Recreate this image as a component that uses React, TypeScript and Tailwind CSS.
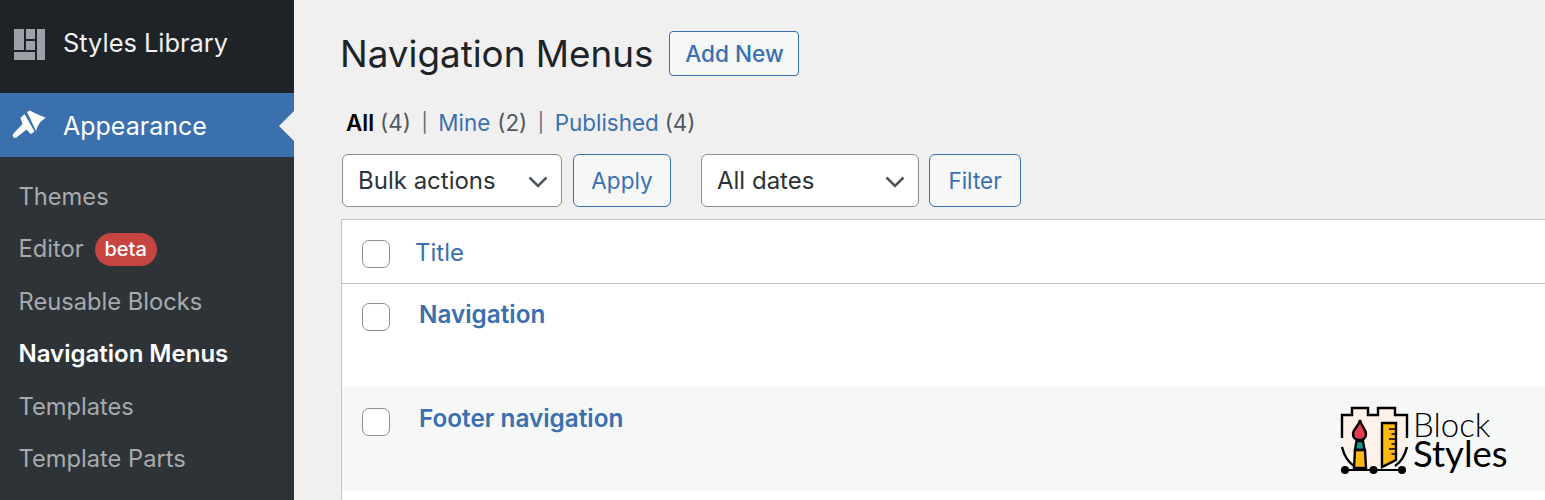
const font = "font-['Inter','Noto_Sans',sans-serif]";

const Check = () => (
  <span className="block w-[28px] h-[28px] rounded-[7px] border-[1.5px] border-[#8c8f94] bg-white shrink-0" />
);

const Chevron = () => (
  <svg width="24" height="24" viewBox="0 0 24 24" fill="none" stroke="#50575e" strokeWidth="2.6">
    <path d="M3.5 8.5 L12 17 L20.5 8.5" />
  </svg>
);

const SideItem = ({ label, active }: { label: string; active?: boolean }) => (
  <div className={`h-[52.5px] flex items-center pl-[18.5px] ${active ? "text-[24px] text-white font-semibold" : "text-[23.7px] text-[#a7aaad]"}`}>
    {label}
  </div>
);

const Sidebar = () => (
  <aside className="w-[294px] shrink-0 bg-[#2e3337] flex flex-col">
    <div className="h-[93px] bg-[#1e2327] flex items-center pl-[14px]">
      <svg width="31" height="31" viewBox="0 0 31 31" fill="#9ca1a7" className="mb-[5px]">
        <path d="M0 0h10v21H0zM12 0h9v10h-9zM12 12h9v9h-9zM23 0h8v31h-8zM0 23h21v8H0z" />
      </svg>
      <span className="ml-[18px] mb-[7px] text-[25.4px] text-[#f0f0f1]">Styles Library</span>
    </div>
    <div className="h-[64px] bg-[#3a70ae] relative flex items-center pl-[8px]">
      <svg width="44" height="40" viewBox="0 0 44 40" fill="#fff" className="-mt-[2px]">
        <path d="M19 8L22 6.500C26 9 31 11 37.500 13.500L32 18.500C30 21 29 24 28 27Z" />
        <path d="M16.500 10L26.500 27.500L23 30C22 29.500 20 27 18.500 25.500L8.500 33.500C6 35 3.500 32 5.500 29.500L14.500 20L12.500 14Z" />
      </svg>
      <span className="ml-[11px] mt-[3px] text-[25px] text-white">Appearance</span>
      <span className="absolute right-0 top-[18px] w-0 h-0 border-y-[15px] border-y-transparent border-r-[15px] border-r-[#f0f0f1]" />
    </div>
    <div className="pt-[13.500px]">
      <SideItem label="Themes" />
      <div className="h-[52.5px] flex items-center pl-[18.5px] text-[23.7px] text-[#a7aaad]">
        Editor
        <span className="ml-[11px] h-[33px] w-[62px] rounded-full bg-[#c64541] text-white text-[20px] font-medium flex items-center justify-center">beta</span>
      </div>
      <SideItem label="Reusable Blocks" />
      <SideItem label="Navigation Menus" active />
      <SideItem label="Templates" />
      <SideItem label="Template Parts" />
    </div>
  </aside>
);

const Select = ({ label, width }: { label: string; width: string }) => (
  <div className={`${width} h-[53px] rounded-[6px] border-[1.5px] border-[#8c8f94] bg-white flex items-center justify-between pl-[15px] pr-[11px] text-[24px] text-[#2c3338]`}>
    <span>{label}</span>
    <Chevron />
  </div>
);

const OutlineButton = ({ label, width }: { label: string; width: string }) => (
  <div className={`${width} h-[53px] rounded-[6px] border-[1.5px] border-[#3a70ae] bg-[#f6f7f7] flex items-center justify-center text-[22.5px] text-[#3a70ae]`}>
    {label}
  </div>
);

const Row = ({ title, alt }: { title: string; alt?: boolean }) => (
  <div className={`flex items-start pl-[20px] ${alt ? "h-[104px] pt-[21px] bg-[#f6f7f7]" : "h-[103px] pt-[19px] bg-white"}`}>
    <Check />
    <span className={`ml-[29px] text-[24.3px] font-semibold text-[#3a70ae] ${alt ? "-mt-[8px]" : "-mt-[7px]"}`}>{title}</span>
  </div>
);

const Separator = () => <span className="text-[19px] text-[#646970] w-[27.5px] flex justify-center">|</span>;

const Logo = () => (
  <div className="absolute right-0 top-[13px] w-[210px] flex items-start">
    <svg width="80" height="80" viewBox="0 0 80 80" fill="none" className="shrink-0">
      <path d="M7 15 H17 V8 H33 V15 H43 V8 H60 V15 H72 V40 C72 52 62 62 39 69 C17 62 7 52 7 40 Z" fill="#fdf1e9" />
      <path d="M7 38 V15 H17 V8 H33 V15 H43 V8 H60 V15 H72 V38 M7 47 C9 55 13 62 19 66 M60 66 C66 62 70 55 72 47" stroke="#000" strokeWidth="2.4" />
      <path d="M47 23 H61 V60 L47 67 Z" fill="#fdb813" stroke="#000" strokeWidth="2.4" />
      <path d="M54 29 H61 M56.500 34 H61 M54 39 H61 M56.500 44 H61 M54 49 H61 M56.500 54 H61" stroke="#000" strokeWidth="1.6" />
      <path d="M25 20 C26 26 31 29 31 34 C31 38 28 40 25 40 C21 40 18 38 18 34 C18 29 24 26 25 20 Z" fill="#e53a52" stroke="#000" strokeWidth="2.4" />
      <path d="M21.500 41 H28 L29.500 50 H20 Z" fill="#139a8a" stroke="#000" strokeWidth="2.4" />
      <path d="M20 50 H30 L31 68 H19 Z" fill="#fdb813" stroke="#000" strokeWidth="2.4" />
      <path d="M10 70 H67" stroke="#000" strokeWidth="1.8" />
      <circle cx="10" cy="70" r="4" fill="#000" />
      <circle cx="38.500" cy="70" r="4" fill="#000" />
      <circle cx="67" cy="70" r="4" fill="#000" />
    </svg>
    <div className="-ml-[2px] mt-[9px] font-['Lato',sans-serif] text-black">
      <div className="text-[33px] font-light leading-[30px]">Block</div>
      <div className="text-[36.5px] leading-[29px]">Styles</div>
    </div>
  </div>
);

export default function App() {
  return (
    <div className={`${font} w-[1545px] h-[500px] overflow-hidden flex bg-[#f0f0f1]`}>
      <Sidebar />
      <main className="flex-1 pl-[47px] min-w-0">
        <div className="flex items-center pt-[31px] h-[76px]">
          <h1 className="text-[36.8px] leading-[45px] -ml-[1px] text-[#1d2327]">Navigation Menus</h1>
          <div className="ml-[16px] w-[130px] h-[45px] rounded-[4px] border-[1.5px] border-[#3a70ae] bg-[#f6f7f7] flex items-center justify-center text-[22.6px] font-medium text-[#3a70ae]">Add New</div>
        </div>
        <div className="mt-[32px] ml-[5px] h-[30px] flex items-center text-[22.4px] text-[#50575e]">
          <b className="font-semibold text-black">All</b>
          <span className="ml-[6px]">(4)</span>
          <Separator />
          <span className="text-[#3a70ae]">Mine</span>
          <span className="ml-[7px]">(2)</span>
          <Separator />
          <span className="text-[#3a70ae]">Published</span>
          <span className="ml-[6px]">(4)</span>
        </div>
        <div className="mt-[16px] ml-[1px] flex items-center">
          <Select label="Bulk actions" width="w-[220px]" />
          <div className="ml-[11px]"><OutlineButton label="Apply" width="w-[98px]" /></div>
          <div className="ml-[30px]"><Select label="All dates" width="w-[218px]" /></div>
          <div className="ml-[10px]"><OutlineButton label="Filter" width="w-[92px]" /></div>
        </div>
        <div className="relative mt-[12px] border-l-[1.5px] border-t-[1.5px] border-[#c3c4c7] bg-white">
          <div className="h-[64px] flex items-center pl-[20px] pt-[5px] border-b-[1.5px] border-[#c3c4c7]">
            <Check />
            <span className="ml-[25px] -mt-[3px] text-[24px] text-[#3a70ae]">Title</span>
          </div>
          <Row title="Navigation" />
          <div className="relative">
            <Row title="Footer navigation" alt />
            <Logo />
          </div>
          <div className="h-[20px] bg-white" />
        </div>
      </main>
    </div>
  );
}
